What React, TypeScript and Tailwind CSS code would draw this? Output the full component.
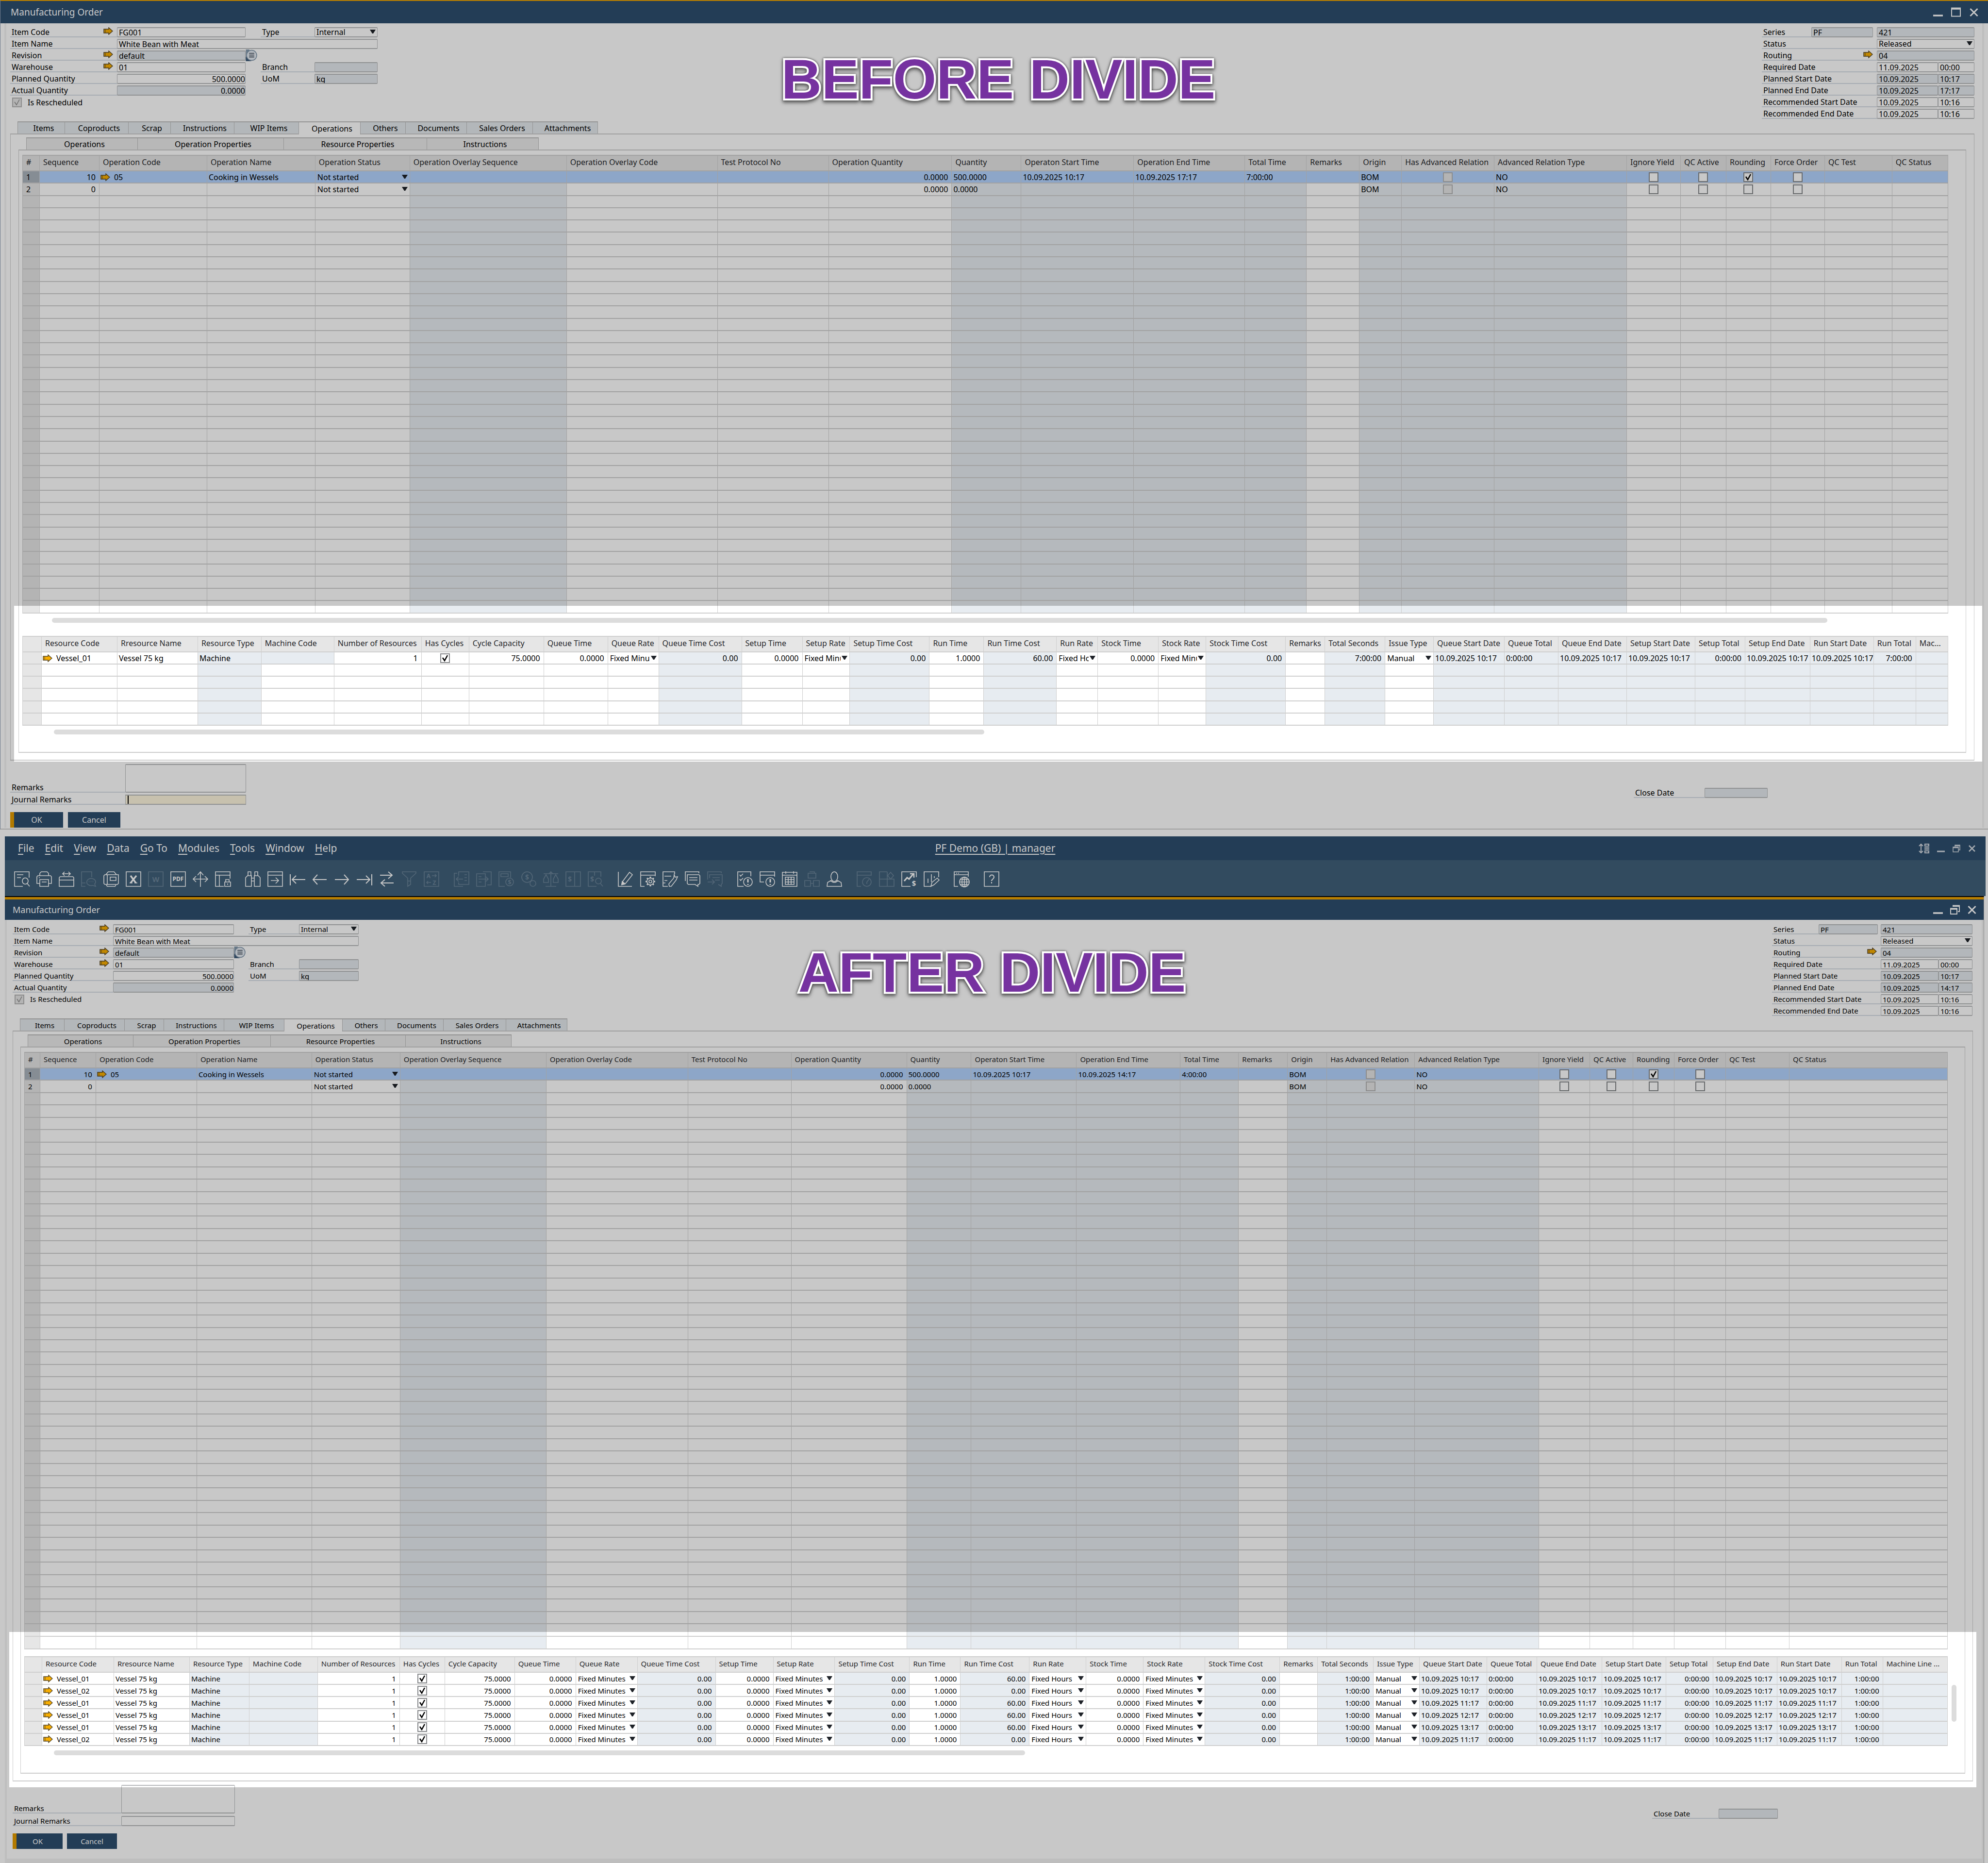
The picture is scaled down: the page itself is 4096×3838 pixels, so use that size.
import React, { useId } from "react";

type Kind = "text" | "select" | "check" | "checkOff" | "link";
type Column = { title: string; w: number; ro?: boolean; right?: boolean; kind?: Kind };
type Size = "lg" | "sm";

/* ---------- small drawings ---------- */

function LinkArrow({ className = "" }: { className?: string }) {
  return (
    <svg viewBox="0 0 20 16" className={"h-4 w-5 shrink-0 " + className} aria-hidden="true">
      <path d="M1 4h10V1l8 7-8 7v-3H1z" fill="#f7ad00" stroke="#5a4a2a" strokeWidth="1.5" />
      <path d="M4 4v8" stroke="#5a4a2a" strokeWidth="1" />
    </svg>
  );
}

function DropArrow() {
  return (
    <svg viewBox="0 0 12 8" className="pointer-events-none absolute right-1 top-[5px] h-2 w-3" aria-hidden="true">
      <path d="M0 0h12L7 8H5z" fill="#1e2228" />
    </svg>
  );
}

function Minimize() {
  return (
    <svg viewBox="0 0 20 20" className="size-5">
      <path d="M0 17h20" stroke="#fff" strokeWidth="3.5" />
    </svg>
  );
}

function Maximize() {
  return (
    <svg viewBox="0 0 20 20" className="size-5">
      <rect x="1" y="1.5" width="18" height="17" fill="none" stroke="#fff" strokeWidth="2" />
      <path d="M0 3h20" stroke="#fff" strokeWidth="3.5" />
    </svg>
  );
}

function Restore() {
  return (
    <svg viewBox="0 0 20 20" className="size-5" fill="none" stroke="#fff" strokeWidth="2">
      <path d="M6 4V1.5h13V14h-3" />
      <path d="M6 2.5h13M1 8.5h13" strokeWidth="3" />
      <path d="M1 7.5h13V19H1z" />
    </svg>
  );
}

function CloseX() {
  return (
    <svg viewBox="0 0 20 20" className="size-5">
      <path d="M2.5 3l15 15M17.500 3l-15 15" stroke="#fff" strokeWidth="3" />
    </svg>
  );
}

/* ---------- form controls ---------- */

function CheckBox({ checked, disabled, label, id }: { checked?: boolean; disabled?: boolean; label?: string; id?: string }) {
  return (
    <span className="relative inline-block size-5 align-middle">
      <input
        id={id}
        type="checkbox"
        aria-label={label}
        defaultChecked={checked}
        disabled={disabled}
        className={
          "block size-5 appearance-none border-2 " +
          (disabled ? "border-[#b4b4b4] bg-[#e6e6e6]" : "border-[#87898c] bg-white")
        }
      />
      {checked && (
        <svg viewBox="0 0 20 20" className="pointer-events-none absolute inset-0 size-5">
          <path d="M5 9l4 6 6-11" fill="none" stroke={disabled ? "#8c8c8c" : "#000"} strokeWidth={disabled ? 1.5 : 2.5} />
        </svg>
      )}
    </span>
  );
}

const fieldBox = "block h-[21px] w-full min-w-0 rounded-[2px] border-x border-y-2 border-[#b8babc] pl-[3px] leading-[17px] text-black outline-none ";

function Field({ id, value = "", ro, right, className = "", label }: { id?: string; value?: string; ro?: boolean; right?: boolean; className?: string; label?: string }) {
  return (
    <input
      id={id}
      aria-label={label}
      defaultValue={value}
      readOnly={ro}
      className={fieldBox + (ro ? "bg-[#e5eaef] " : "bg-white ") + (right ? "text-right " : "") + className}
    />
  );
}

function Drop({ id, value, className = "" }: { id?: string; value: string; className?: string }) {
  return (
    <div className={"relative h-[21px] " + className}>
      <select id={id} defaultValue={value} className={fieldBox + "appearance-none bg-white pr-4"}>
        <option>{value}</option>
      </select>
      <DropArrow />
    </div>
  );
}

function Label({ htmlFor, children, arrow, className = "" }: { htmlFor?: string; children: React.ReactNode; arrow?: boolean; className?: string }) {
  return (
    <label htmlFor={htmlFor} className={"flex h-[21px] justify-between border-b-2 border-[#d6dde5] pl-[3px] leading-[21px] whitespace-nowrap " + className}>
      <span>{children}</span>
      {arrow && <LinkArrow className="mr-2" />}
    </label>
  );
}

/* ---------- window parts ---------- */

function TitleBar({ size, maximized }: { size: Size; maximized?: boolean }) {
  return (
    <div
      className={
        "flex items-center justify-between bg-[#2d4e6e] text-white " +
        (size === "lg" ? "h-12 border-t-2 border-t-[#eca300] pl-[21px] pr-[19px]" : "h-[47px] border-t-[5px] border-t-[#eca300] pl-4 pr-[14px]")
      }
    >
      <h2 className={size === "lg" ? "text-[19px]" : "text-[18px]"}>Manufacturing Order</h2>
      <div className={"flex " + (size === "lg" ? "gap-[17px]" : "gap-[15px]")}>
        <button aria-label="Minimize"><Minimize /></button>
        <button aria-label="Restore">{maximized ? <Restore /> : <Maximize />}</button>
        <button aria-label="Close"><CloseX /></button>
      </div>
    </div>
  );
}

function OrderHeader({ size, plannedEnd }: { size: Size; plannedEnd: string }) {
  const p = useId();
  const lg = size === "lg";
  const dates: [string, string, string, boolean][] = [
    ["Required Date", "11.09.2025", "00:00", false],
    ["Planned Start Date", "10.09.2025", "10:17", true],
    ["Planned End Date", "10.09.2025", plannedEnd, true],
    ["Recommended Start Date", "10.09.2025", "10:16", false],
    ["Recommended End Date", "10.09.2025", "10:16", false],
  ];
  return (
    <div className={"flex justify-between pb-[5px] " + (lg ? "pl-[21px] pr-7 pt-2" : "pl-4 pr-[23px] pt-[9px]")}>
      <div
        className={
          "grid content-start gap-y-[3px] " +
          (lg ? "grid-cols-[220px_265px_31px_111px_130px]" : "grid-cols-[207px_249px_30px_104px_123px]")
        }
      >
        <Label htmlFor={p + "code"} arrow>Item Code</Label>
        <Field id={p + "code"} value="FG001" />
        <Label htmlFor={p + "type"} className="col-start-4">Type</Label>
        <Drop id={p + "type"} value="Internal" />

        <Label htmlFor={p + "name"}>Item Name</Label>
        <Field id={p + "name"} value="White Bean with Meat" className="col-span-4" />

        <Label htmlFor={p + "rev"} arrow>Revision</Label>
        <Field id={p + "rev"} value="default" ro />
        <button aria-label="Choose revision" className="h-[21px] w-[25px]">
          <svg viewBox="0 0 25 22" className="block h-[21px] w-[25px] overflow-visible">
            <path d="M0 -2h8L3 10l6 13H0z" fill="#8399ad" />
            <path d="M2 14c2 5 6 8 11 9H0V14z" fill="#3d5a78" />
            <circle cx="12.500" cy="10.500" r="11" fill="#e3eaf1" stroke="#7d93a8" strokeWidth="1.500" />
            <path d="M7 6h11M7 10h11M7 14h11" stroke="#3a4654" strokeWidth="1.600" />
          </svg>
        </button>

        <Label htmlFor={p + "wh"} arrow className="col-start-1">Warehouse</Label>
        <Field id={p + "wh"} value="01" />
        <Label htmlFor={p + "br"} className="col-start-4">Branch</Label>
        <Field id={p + "br"} ro />

        <Label htmlFor={p + "pq"}>Planned Quantity</Label>
        <Field id={p + "pq"} value="500.0000" right />
        <Label htmlFor={p + "uom"} className="col-start-4">UoM</Label>
        <Field id={p + "uom"} value="kg" ro />

        <Label htmlFor={p + "aq"} className="col-start-1">Actual Quantity</Label>
        <Field id={p + "aq"} value="0.0000" ro right />

        <div className="col-span-2 col-start-1 flex h-[21px] items-center gap-3 pl-1">
          <CheckBox id={p + "res"} checked disabled />
          <label htmlFor={p + "res"}>Is Rescheduled</label>
        </div>
      </div>

      <div
        className={
          "grid content-start gap-y-[3px] " +
          (lg ? "grid-cols-[102px_127px_8px_126px_75px]" : "grid-cols-[96px_122px_6px_119px_70px]")
        }
      >
        <Label htmlFor={p + "ser"}>Series</Label>
        <Field id={p + "ser"} value="PF" ro />
        <Field value="421" ro label="Number" className="col-span-2 col-start-4" />

        <Label htmlFor={p + "st"} className="col-span-3">Status</Label>
        <Drop id={p + "st"} value="Released" className="col-span-2" />

        <Label htmlFor={p + "rt"} arrow className="col-span-3">Routing</Label>
        <Field id={p + "rt"} value="04" ro className="col-span-2" />

        {dates.map(([name, date, time, ro]) => (
          <React.Fragment key={name}>
            <Label htmlFor={p + name} className="col-span-3">{name}</Label>
            <Field id={p + name} value={date} ro={ro} />
            <Field value={time} ro={ro} label={name + " time"} />
          </React.Fragment>
        ))}
      </div>
    </div>
  );
}

function DataTable({ columns, rows, count, selected, height, plainEmpty }: {
  columns: Column[];
  rows: string[][];
  count: number;
  selected?: number;
  height: string;
  plainEmpty?: number;
}) {
  const total = columns.reduce((s, c) => s + c.w, 0);
  return (
    <table className={"w-full table-fixed border-separate border-spacing-0 border-l border-t-2 border-[#cfcfcf] " + height}>
      <colgroup>
        {columns.map((c, i) => (
          <col key={i} style={{ width: (c.w / total) * 100 + "%" }} />
        ))}
      </colgroup>
      <thead>
        <tr>
          {columns.map((c, i) => (
            <th key={i} scope="col" className="h-8 overflow-hidden border-b-2 border-r border-[#cfcfcf] bg-[#e6e6e6] pb-1 pl-[7px] text-left font-normal leading-5 whitespace-nowrap text-[#26282c]">
              {c.title}
            </th>
          ))}
        </tr>
      </thead>
      <tbody>
        {Array.from({ length: count }, (_, r) => (
          <tr key={r}>
            {columns.map((c, i) => {
              const v = rows[r]?.[i] ?? "";
              const sel = r === selected;
              const bg =
                i === 0 ? (sel ? "bg-[#abb4bd]" : "bg-[#e6e6e6]")
                : sel ? "bg-[#b4d4ff]"
                : c.ro && !(i === plainEmpty && !rows[r]) ? "bg-[#e7ecf1]"
                : "bg-white";
              let body: React.ReactNode = v;
              if (rows[r] && (c.kind === "check" || c.kind === "checkOff")) {
                body = <CheckBox checked={v === "1"} disabled={c.kind === "checkOff"} label={c.title} />;
              } else if (v && c.kind === "select") {
                body = (
                  <div className="relative">
                    <select aria-label={c.title} defaultValue={v} className="block h-5 w-full appearance-none bg-transparent pl-1 pr-[18px] leading-5 outline-none">
                      <option>{v}</option>
                    </select>
                    <DropArrow />
                  </div>
                );
              } else if (v && c.kind === "link") {
                body = (
                  <span className="flex items-center gap-2">
                    <LinkArrow />
                    {v}
                  </span>
                );
              }
              const pad =
                c.kind === "check" || c.kind === "checkOff" ? "text-center leading-none"
                : c.kind === "select" ? ""
                : c.kind === "link" ? "pl-0.5"
                : i === 0 ? "pl-[7px]"
                : c.right ? "pr-[7px] text-right"
                : "pl-[3px]";
              return (
                <td key={i} className={"h-[25px] overflow-hidden border-b-2 border-r border-[#cfcfcf] leading-5 whitespace-nowrap " + bg + " " + pad}>
                  {body}
                </td>
              );
            })}
          </tr>
        ))}
      </tbody>
    </table>
  );
}

function Footer({ size, active }: { size: Size; active?: boolean }) {
  const p = useId();
  const lg = size === "lg";
  return (
    <>
      <div className={"mt-[7px] flex items-start justify-between " + (lg ? "pl-[21px] pr-[454px]" : "pl-4 pr-[424px]")}>
        <div className={"grid items-end " + (lg ? "grid-cols-[237px_249px] gap-y-1" : "grid-cols-[224px_234px] gap-y-[5px]")}>
          <Label htmlFor={p + "rem"}>Remarks</Label>
          <textarea id={p + "rem"} className="block h-[59px] w-full resize-none rounded-[2px] border-x border-y-2 border-[#b8babc] bg-white" />
          <Label htmlFor={p + "jr"}>Journal Remarks</Label>
          {active ? (
            <div className="flex h-[21px] border-x border-y-2 border-[#b8babc] bg-[#fef6de] pl-1">
              <input id={p + "jr"} className="w-full border-l-2 border-black bg-transparent outline-none" />
            </div>
          ) : (
            <Field id={p + "jr"} />
          )}
        </div>
        <div className={"mt-[49px] grid " + (lg ? "grid-cols-[146px_130px]" : "grid-cols-[137px_122px]")}>
          <Label htmlFor={p + "cd"}>Close Date</Label>
          <Field id={p + "cd"} ro />
        </div>
      </div>
      <div className={"mt-[15px] flex text-white " + (lg ? "gap-2.5 pl-[21px]" : "gap-[9px] pl-4")}>
        <button className={"h-8 border-l-8 border-[#e39c00] bg-[#2d4e6e] pr-2 " + (lg ? "w-[109px]" : "w-[103px]")}>OK</button>
        <button className={"h-8 bg-[#2d4e6e] " + (lg ? "w-[108px]" : "w-[103px]")}>Cancel</button>
      </div>
    </>
  );
}

type Tab = [string, string];

function Tabs({ tabs, sub, size }: { tabs: Tab[]; sub?: boolean; size: Size }) {
  return (
    <div role="tablist" className={"flex " + (sub ? (size === "lg" ? "ml-[32px]" : "ml-[30px]") : size === "lg" ? "ml-9" : "ml-[31px]")}>
      {tabs.map(([name, w]) => {
        const on = !sub && name === "Operations";
        return (
          <button
            key={name}
            role="tab"
            aria-selected={on}
            className={
              "border-r border-t-2 border-[#bdbdbd] pl-[10px] leading-[22px] first:border-l " +
              (on ? "relative z-10 -mb-0.5 bg-white " : sub ? "bg-[#ebebeb] " : "bg-[#e5eaee] ") +
              (on ? "h-[27px] " : "h-[25px] ") +
              w
            }
          >
            {name}
          </button>
        );
      })}
    </div>
  );
}

function Banner({ children, className }: { children: string; className: string }) {
  return (
    <div className={"pointer-events-none absolute inset-x-0 z-30 flex justify-center " + className}>
      <p className="font-['Liberation_Sans',sans-serif] text-[115px] font-bold leading-none whitespace-nowrap text-[#7632a0] [-webkit-text-stroke:8px_white] [filter:drop-shadow(0_0_2px_#444)_drop-shadow(0_4px_3px_#666)] [paint-order:stroke_fill]">
        {children}
      </p>
    </div>
  );
}

/* ---------- data ---------- */

const operationTitles: Omit<Column, "w">[] = [
  { title: "#" },
  { title: "Sequence", right: true },
  { title: "Operation Code", kind: "link" },
  { title: "Operation Name" },
  { title: "Operation Status", kind: "select" },
  { title: "Operation Overlay Sequence", ro: true },
  { title: "Operation Overlay Code" },
  { title: "Test Protocol No" },
  { title: "Operation Quantity", right: true },
  { title: "Quantity", ro: true },
  { title: "Operaton Start Time", ro: true },
  { title: "Operation End Time", ro: true },
  { title: "Total Time", ro: true },
  { title: "Remarks" },
  { title: "Origin", ro: true },
  { title: "Has Advanced Relation", ro: true, kind: "checkOff" },
  { title: "Advanced Relation Type", ro: true },
  { title: "Ignore Yield", kind: "check" },
  { title: "QC Active", kind: "check" },
  { title: "Rounding", kind: "check" },
  { title: "Force Order", kind: "check" },
  { title: "QC Test" },
  { title: "QC Status" },
];

const resourceTitles: Omit<Column, "w">[] = [
  { title: "" },
  { title: "Resource Code", kind: "link" },
  { title: "Rresource Name" },
  { title: "Resource Type", ro: true },
  { title: "Machine Code", ro: true },
  { title: "Number of Resources", right: true },
  { title: "Has Cycles", kind: "check" },
  { title: "Cycle Capacity", right: true },
  { title: "Queue Time", right: true },
  { title: "Queue Rate", kind: "select" },
  { title: "Queue Time Cost", ro: true, right: true },
  { title: "Setup Time", right: true },
  { title: "Setup Rate", kind: "select" },
  { title: "Setup Time Cost", ro: true, right: true },
  { title: "Run Time", right: true },
  { title: "Run Time Cost", ro: true, right: true },
  { title: "Run Rate", kind: "select" },
  { title: "Stock Time", right: true },
  { title: "Stock Rate", kind: "select" },
  { title: "Stock Time Cost", ro: true, right: true },
  { title: "Remarks" },
  { title: "Total Seconds", ro: true, right: true },
  { title: "Issue Type", kind: "select" },
  { title: "Queue Start Date", ro: true },
  { title: "Queue Total", ro: true },
  { title: "Queue End Date", ro: true },
  { title: "Setup Start Date", ro: true },
  { title: "Setup Total", ro: true, right: true },
  { title: "Setup End Date", ro: true },
  { title: "Run Start Date", ro: true },
  { title: "Run Total", ro: true, right: true },
  { title: "Machine Line ...", ro: true },
];

const withWidths = (cols: Omit<Column, "w">[], widths: number[]): Column[] => cols.map((c, i) => ({ ...c, w: widths[i] }));

const opColsBefore = withWidths(operationTitles, [35, 123, 222, 223, 195, 323, 311, 229, 254, 143, 232, 229, 127, 109, 87, 191, 273, 111, 94, 92, 111, 139, 115]);
const opColsAfter = withWidths(operationTitles, [32, 115, 208, 237, 182, 301, 292, 213, 238, 133, 217, 214, 120, 101, 81, 181, 256, 105, 89, 85, 106, 131, 326]);
const resColsBefore = withWidths(resourceTitles, [39, 156, 166, 131, 150, 180, 98, 154, 132, 105, 171, 125, 98, 164, 112, 150, 85, 125, 98, 164, 81, 124, 100, 146, 111, 141, 141, 103, 134, 131, 87, 66]).map((c) =>
  c.title.startsWith("Machine Line") ? { ...c, title: "Mac..." } : c,
);
const resColsAfter = withWidths(resourceTitles, [36, 148, 156, 123, 141, 169, 93, 144, 126, 127, 161, 119, 127, 154, 105, 142, 117, 118, 127, 154, 78, 115, 95, 139, 103, 134, 132, 97, 132, 133, 85, 133]);

const opRows = (end: string, total: string): string[][] => [
  ["1", "10", "05", "Cooking in Wessels", "Not started", "", "", "", "0.0000", "500.0000", "10.09.2025 10:17", end, total, "", "BOM", "0", "NO", "0", "0", "1", "0", "", ""],
  ["2", "0", "", "", "Not started", "", "", "", "0.0000", "0.0000", "", "", "", "", "BOM", "0", "NO", "0", "0", "0", "0", "", ""],
];

const resRow = (code: string, cost: string, time: string, total: string): string[] => {
  const d = "10.09.2025 " + time;
  return ["", code, "Vessel 75 kg", "Machine", "", "1", "1", "75.0000", "0.0000", "Fixed Minutes", "0.00", "0.0000", "Fixed Minutes", "0.00", "1.0000", cost, "Fixed Hours", "0.0000", "Fixed Minutes", "0.00", "", total, "Manual", d, "0:00:00", d, d, "0:00:00", d, d, total, ""];
};

const tabsBefore: Tab[] = [
  ["Items", "w-[98px]"], ["Coproducts", "w-[131px]"], ["Scrap", "w-[87px]"], ["Instructions", "w-[131px]"], ["WIP Items", "w-[133px]"],
  ["Operations", "w-[127px]"], ["Others", "w-[93px]"], ["Documents", "w-[126px]"], ["Sales Orders", "w-[136px]"], ["Attachments", "w-[134px]"],
];
const tabsAfter: Tab[] = [
  ["Items", "w-[92px]"], ["Coproducts", "w-[124px]"], ["Scrap", "w-[81px]"], ["Instructions", "w-[124px]"], ["WIP Items", "w-[124px]"],
  ["Operations", "w-[120px]"], ["Others", "w-[88px]"], ["Documents", "w-[120px]"], ["Sales Orders", "w-[129px]"], ["Attachments", "w-[126px]"],
];
const subBefore: Tab[] = [["Operations", "w-[230px]"], ["Operation Properties", "w-[301px]"], ["Resource Properties", "w-[295px]"], ["Instructions", "w-[230px]"]];
const subAfter: Tab[] = [["Operations", "w-[218px]"], ["Operation Properties", "w-[283px]"], ["Resource Properties", "w-[278px]"], ["Instructions", "w-[218px]"]];

/* ---------- toolbar icons ---------- */

const T = ({ x, y, s, children }: { x: number; y: number; s: number; children: string }) => (
  <text x={x} y={y} fontSize={s} fontWeight="700" textAnchor="middle" fill="currentColor" stroke="none" fontFamily="Noto Sans, sans-serif">
    {children}
  </text>
);

type Tool = { name: string; off?: boolean; art: React.ReactNode };

const toolGroups: Tool[][] = [
  [
    { name: "Preview", art: <><path d="M31 13V1H1v30h17M6 7h13M6 13h8" /><ellipse cx="23" cy="20" rx="6" ry="6.500" /><path d="M27 25l5 6" /></> },
    { name: "Print", art: <><path d="M7 9V4l3-3h12l3 3v5M7 25H1V11l2-2h26l2 2v14h-6" /><path d="M7 17h18v14H7zM11 22h10" /><path d="M5 13h2" /></> },
    { name: "Send", art: <><path d="M9 5h14M12 1L8 5l4 4M20 1l4 4-4 4" /><path d="M1 31V13l2-2h26l2 2v18zM1 18h30" /></> },
    { name: "Send SMS", off: true, art: <><path d="M22 12V1H1v30h8M1 24h8" /><path d="M12 21a9 7 0 1 1 16 5l2 5-6-2a9 7 0 0 1-12-8z" /><path d="M16 21h1M20 21h1M24 21h1" strokeWidth="2.500" /></> },
    { name: "Fax", art: <><path d="M5 7l5-6h12l5 6M1 9l2-2h28v18l-2 2H3l-2-2zM8 7v20M14 12h12v7H14z" /><path d="M6 28l2 3h16l2-3" /></> },
    { name: "Export to Excel", art: <><path d="M1 1h30v30H1z" /><path d="M10 9l11 15M22 9L10 24" strokeWidth="3.500" /><path d="M8 24h6M18 24h6" /></> },
    { name: "Export to Word", off: true, art: <><path d="M1 1h30v30H1z" /><T x={16} y={22} s={15}>W</T></> },
    { name: "Export to PDF", art: <><path d="M1 1h30v30H1z" /><T x={16} y={20} s={12}>PDF</T></> },
    { name: "Launch", art: <><path d="M16 1v31M1 16h30M10 8l6-7 6 7M7 10l-6 6 6 6M25 10l6 6-6 6" /></> },
    { name: "Lock Screen", art: <><path d="M31 15V1H1v30h17M1 8h30M9 8v23" /><path d="M20 22h12v9H20zM22 22v-5h7v5M26 25v3" /></> },
  ],
  [
    { name: "Find", art: <><path d="M6 9V1h6v8M20 9V1h6v8M1 31V13l4-4h8v22zM31 31V13l-4-4h-8v22zM13 14h6M13 20h6" /></> },
    { name: "Add", art: <><path d="M1 1h30v30H1zM1 8h30M7 19h16M17 13l6 6-6 6" /></> },
    { name: "First Record", art: <path d="M1 6v23M32 17H5M13 9l-8 8 8 8" strokeWidth="2" /> },
    { name: "Previous Record", art: <path d="M30 17H2M11 7L2 17l9 10" strokeWidth="2" /> },
    { name: "Next Record", art: <path d="M1 17h28M20 7l9 10-9 10" strokeWidth="2" /> },
    { name: "Last Record", art: <path d="M31 6v23M0 17h27M19 9l8 8-8 8" strokeWidth="2" /> },
    { name: "Refresh", art: <path d="M2 8h25M19 1l8 7-8 7M30 24H4M12 17l-8 7 8 7" strokeWidth="2" /> },
    { name: "Filter", off: true, art: <path d="M2 1h28v3L19 14v13l-6 4V14L2 4zM13 20h6" /> },
    { name: "Sort", off: true, art: <><path d="M1 1h30v30H1z" /><T x={10} y={14} s={12}>A</T><T x={22} y={28} s={12}>Z</T><path d="M17 9h9M23 6l3 3-3 3M15 23H6M9 20l-3 3 3 3" /></> },
  ],
  [
    { name: "Base Document", off: true, art: <><path d="M10 9V1h21v26H10v-4M7 4H1v27h18" /><path d="M22 7h5M22 13h5M22 19h5M19 16H5M10 11l-5 5 5 5" /></> },
    { name: "Target Document", off: true, art: <><path d="M1 5h18v26H1zM14 1h17v27h-8" /><path d="M5 11h6M5 22h6M5 16h20M20 11l5 5-5 5" /></> },
    { name: "Gross Profit", off: true, art: <><path d="M25 13V1H1v30h12M5 5h15v6H5z" /><circle cx="23" cy="22" r="8" /><T x={23} y={27} s={13}>$</T></> },
    { name: "Payment Means", off: true, art: <><circle cx="13" cy="12" r="11" /><T x={13} y={17} s={14}>$</T><circle cx="25" cy="25" r="6" /></> },
    { name: "Volume and Weight", off: true, art: <><path d="M16 1v30M1 5h30M5 31h22M12 5l4-4 4 4" /><path d="M6 7l-5 9v7h10v-7zM26 7l-5 9v7h10v-7z" /></> },
    { name: "Split", off: true, art: <><path d="M1 1h30v30H1zM19 1v30" /><T x={9} y={21} s={14}>$</T></> },
    { name: "Find Payment", off: true, art: <><path d="M27 11V1H1v30h17M14 1v8" /><T x={9} y={21} s={14}>$</T><circle cx="22" cy="20" r="6" /><path d="M26 25l5 6" /></> },
  ],
  [
    { name: "Edit", art: <><path d="M1 1v30h28" /><path d="M9 22l15-20 6 5-15 19-7 2z" /><path d="M8 27l1-6 5 4z" fill="currentColor" /></> },
    { name: "Form Settings", art: <><path d="M31 10V1H1v30h8M1 8h30" /><circle cx="21" cy="21" r="7" /><circle cx="21" cy="21" r="3" /><path d="M21 11v3M21 28v3M11 21h3M28 21h3M14 14l2 2M26 26l2 2M28 14l-2 2M16 26l-2 2" strokeWidth="3" /></> },
    { name: "Layout Designer", art: <><path d="M25 6V1H1v30h10M4 10h14M4 19h6M1 24h5" /><path d="M24 7l2 5 5-1-3 7-10 13h-4l-1-5 10-12z" /></> },
    { name: "Messages", art: <><path d="M1 20V1h28v3" /><path d="M5 7h24l2 2v16l-2 2h-2v4l-6-4H7l-2-2z" /><path d="M9 13h17M9 18h17" /></> },
    { name: "Send Message", off: true, art: <><path d="M1 17V1h28v3" /><path d="M5 14V7h26v18l-2 2v4l-6-4" /><path d="M11 13h15M16 18h10M1 22h14M10 17l5 5-5 5" /></> },
  ],
  [
    { name: "Approvals", art: <><path d="M28 10V1H1v30h12M5 7l2 3 5-5M5 16l2 3 5-5" /><circle cx="22" cy="22" r="9" /><path d="M22 16v7M22 26v2" strokeWidth="3" /></> },
    { name: "Alerts", art: <><path d="M31 11V1H1v21h8M1 8h30" /><circle cx="22" cy="22" r="9" /><path d="M22 16v7M22 26v2" strokeWidth="3" /></> },
    { name: "Calendar", art: <><path d="M1 2h30v29H1zM1 8h30M8 0v5M24 0v5" /><path d="M7 12h18v15H7zM7 17h18M7 22h18M13 12v15M19 12v15" /></> },
    { name: "Relationship Map", off: true, art: <><path d="M8 4h16v10H8zM11 1h10v3M1 19h12v12H1zM19 19h12v12H19zM13 25h6" /></> },
    { name: "Employee", art: <><ellipse cx="16" cy="11" rx="7" ry="10" /><path d="M9 19l-7 4-1 8h30l-1-8-7-4c-3 5-11 5-14 0z" /></> },
  ],
  [
    { name: "Schedule", off: true, art: <><path d="M30 9V1H1v30h8M1 8h29" /><circle cx="21" cy="22" r="9" /><path d="M21 22l5-6M21 22v4" /></> },
    { name: "Widgets", off: true, art: <><path d="M17 1H1v30h30V16H1M17 1v30" /><path d="M24 2l6 7-6 7-6-7z" /></> },
    { name: "Sales Analysis", art: <><path d="M31 12V1H1v30h18" /><path d="M6 20l6-7 4 3 9-11" strokeWidth="3" /><path d="M18 5h8v8" strokeWidth="2.500" /><T x={26} y={30} s={15}>$</T></> },
    { name: "Edit Chart", art: <><path d="M31 12V1H1v30h14M9 24v-9M16 22V6M22 14v-4" /><path d="M15 31l2-8 11-9 4 4-11 10z" /></> },
  ],
  [{ name: "Browser", art: <><path d="M30 11V1H1v30h8M1 7h29M5 4h2M9 4h2" /><circle cx="22" cy="22" r="10" /><path d="M12 22h20M22 12v20M14 17h16M14 27h16" /><ellipse cx="22" cy="22" rx="5" ry="10" /></> }],
  [{ name: "Help", art: <><path d="M1 1h30v30H1z" /><path d="M12 12c0-6 9-6 9 0 0 4-5 4-5 8M16 22v3" strokeWidth="2" /></> }],
];

function Toolbar() {
  return (
    <div className="flex h-[74px] items-center gap-[30px] bg-[#406079] pl-[19px] pt-1" role="toolbar" aria-label="Main toolbar">
      {toolGroups.map((g, i) => (
        <div key={i} className="flex gap-3.5">
          {g.map((t) => (
            <button key={t.name} aria-label={t.name} disabled={t.off} className={t.off ? "text-[#6b8499]" : "text-white"}>
              <svg viewBox="0 0 32 32" className="size-8 overflow-visible" fill="none" stroke="currentColor" strokeWidth="1.600">
                {t.art}
              </svg>
            </button>
          ))}
        </div>
      ))}
    </div>
  );
}

function MenuBar() {
  const items = ["File", "Edit", "View", "Data", "Go To", "Modules", "Tools", "Window", "Help"];
  return (
    <div className="relative flex h-[49px] items-center justify-between bg-[#2d4e6e] pl-[27px] pr-5 text-[21px] text-white">
      <nav className="flex gap-[22px]">
        {items.map((m) => (
          <button key={m} className="whitespace-nowrap">
            <span className="underline underline-offset-4">{m[0]}</span>
            {m.slice(1)}
          </button>
        ))}
      </nav>
      <a href="#company" className="absolute left-1/2 -translate-x-1/2 underline underline-offset-4">
        PF Demo (GB) | manager
      </a>
      <div className="flex items-center gap-4 opacity-80">
        <button aria-label="Adjust">
          <svg viewBox="0 0 22 20" className="h-5 w-[22px]" fill="none" stroke="#fff" strokeWidth="2">
            <path d="M5 1v18M1 5l4-4 4 4M1 15l4 4 4-4M13 1h8v4h-8zM13 15h8v4h-8zM12 8.500h10M12 11.500h10" />
          </svg>
        </button>
        <button aria-label="Minimize application"><svg viewBox="0 0 16 16" className="size-4"><path d="M0 14h16" stroke="#fff" strokeWidth="3" /></svg></button>
        <button aria-label="Restore application">
          <svg viewBox="0 0 16 16" className="size-4" fill="none" stroke="#fff" strokeWidth="1.500">
            <path d="M5 4V1h10v10h-3M1 5h11v10H1zM5 2.500h10M1 6.500h11" />
          </svg>
        </button>
        <button aria-label="Close application"><svg viewBox="0 0 16 16" className="size-4"><path d="M2 2l12 12M14 2L2 14" stroke="#fff" strokeWidth="2.500" /></svg></button>
      </div>
    </div>
  );
}

const dim = "pointer-events-none absolute z-20 shadow-[0_0_0_9999px_rgba(0,0,0,0.216)] ";
const panel = "border-x border-y-2 border-[#cdcdcd] ";
const thumb = "h-2.5 rounded-full bg-[#dcdcdc] ";

export default function App() {
  return (
    <main className="min-h-screen w-full bg-[#c8c8c8] font-['Noto_Sans',sans-serif] text-black">
      <section aria-label="Before divide" className="relative overflow-hidden bg-white pb-3.5 text-[16px]">
        <div className="border-b-2 border-l border-b-[#cccccc] border-l-[#8fa0b4] pb-0.5">
          <TitleBar size="lg" />
          <div className="mx-2 border-x-4 border-[#f3f3f3]">
            <div className="-ml-[13px] -mr-3">
              <OrderHeader size="lg" plannedEnd="17:17" />
              <Tabs size="lg" tabs={tabsBefore} />
              <div className={panel + "ml-[21px] mr-7 pb-3.5 pt-1.5"}>
                <Tabs size="lg" sub tabs={subBefore} />
                <div className={panel + "ml-4 mr-4 pb-9 pl-[7px] pr-9 pt-[9px]"}>
                  <DataTable columns={opColsBefore} rows={opRows("10.09.2025 17:17", "7:00:00")} count={36} selected={0} height="h-[945px]" />
                  <div className={thumb + "ml-[61px] mr-[249px] mt-[9px]"} />
                  <div className="mt-[27px]">
                    <DataTable columns={resColsBefore} rows={[resRow("Vessel_01", "60.00", "10:17", "7:00:00")]} count={6} height="h-[185px]" plainEmpty={4} />
                  </div>
                  <div className={thumb + "ml-[65px] mt-2 w-[48.3%]"} />
                </div>
              </div>
              <Footer size="lg" active />
            </div>
          </div>
        </div>
        <div className={dim + "left-[29px] right-3 top-[1248px] h-[321px]"} />
        <Banner className="top-[106px] pl-[18px]">BEFORE DIVIDE</Banner>
      </section>

      <section aria-label="After divide" className="relative overflow-hidden bg-white pl-[10px] pr-[5px] text-[15px]">
        <MenuBar />
        <Toolbar />
        <div className="mr-[3px] border-r border-t-2 border-r-[#b0b0b0] border-t-black">
          <TitleBar size="sm" maximized />
          <div className="border-x-4 border-[#f3f3f3]">
            <div className="-mx-1">
              <OrderHeader size="sm" plannedEnd="14:17" />
              <Tabs size="sm" tabs={tabsAfter} />
              <div className={panel + "ml-4 mr-[22px] pb-3.5 pt-1.5"}>
                <Tabs size="sm" sub tabs={subAfter} />
                <div className={panel + "mx-[15px] pb-9 pl-[7px] pr-[35px] pt-[9px]"}>
                  <DataTable columns={opColsAfter} rows={opRows("10.09.2025 14:17", "4:00:00")} count={47} selected={0} height="h-[1231px]" />
                  <div className="relative mt-3.5">
                    <DataTable
                      columns={resColsAfter}
                      rows={[
                        resRow("Vessel_01", "60.00", "10:17", "1:00:00"),
                        resRow("Vessel_02", "0.00", "10:17", "1:00:00"),
                        resRow("Vessel_01", "60.00", "11:17", "1:00:00"),
                        resRow("Vessel_01", "60.00", "12:17", "1:00:00"),
                        resRow("Vessel_01", "60.00", "13:17", "1:00:00"),
                        resRow("Vessel_02", "0.00", "11:17", "1:00:00"),
                      ]}
                      count={6}
                      height="h-[185px]"
                    />
                    <div className="absolute left-full top-[59px] ml-2 h-[76px] w-2.5 rounded-full bg-[#dcdcdc]" />
                  </div>
                  <div className={thumb + "ml-[61px] mt-[9px] w-[50.5%]"} />
                </div>
              </div>
              <Footer size="sm" />
              <div className="mt-5 h-[9px] bg-[#f2f2f2]" />
            </div>
          </div>
        </div>
        <div className={dim + "left-[19px] right-6 top-[1639px] h-80"} />
        <Banner className="top-[223px] pr-2">AFTER DIVIDE</Banner>
      </section>
    </main>
  );
}
